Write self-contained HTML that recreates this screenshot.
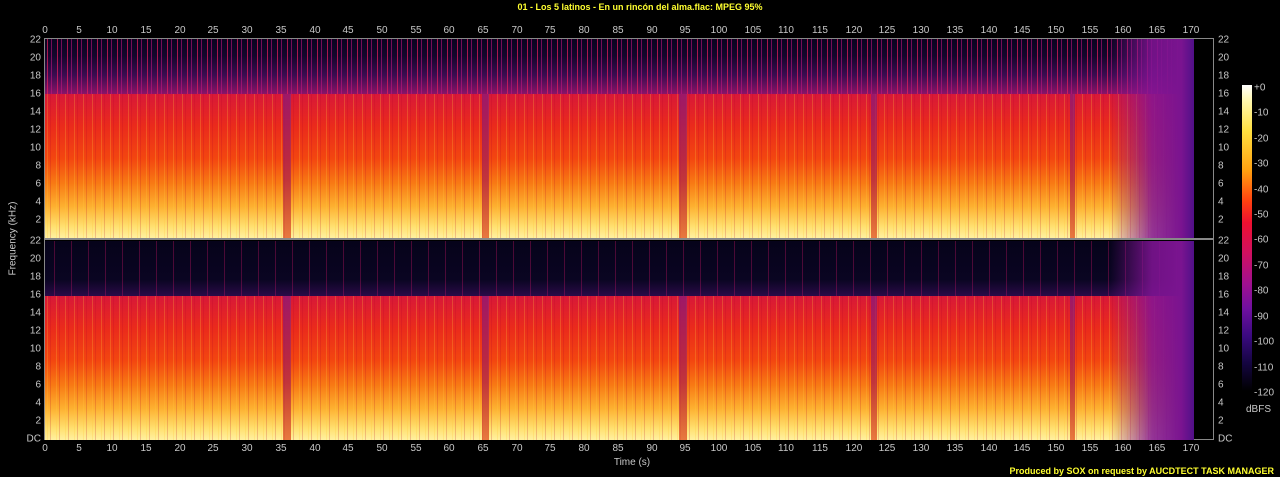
<!DOCTYPE html>
<html><head><meta charset="utf-8"><style>
*{margin:0;padding:0;box-sizing:border-box}
body{width:1280px;height:477px;background:#000;position:relative;overflow:hidden;font-family:"Liberation Sans",sans-serif;color:#c8c8c8;font-size:10px}
.t{position:absolute;top:2px;left:0;width:1280px;text-align:center;color:#ffff30;font-weight:bold;font-size:9px}
.frame{position:absolute;left:44px;width:1170px;border:1px solid #888}
.panel{position:absolute;left:45px;width:1149px;height:199px;overflow:hidden}
.hi{position:absolute;left:0;top:0;width:100%;height:55px;background:
repeating-linear-gradient(90deg,rgba(0,0,0,0) 0 2px,rgba(235,30,90,.7) 2px 3px,rgba(0,0,0,0) 3px 6px,rgba(200,20,130,.55) 6px 7px,rgba(0,0,0,0) 7px 10px),
linear-gradient(180deg,#0a0420 0%,#14062c 30%,#3a0c50 65%,#8a1468 100%)}
.lo{position:absolute;left:0;top:55px;width:100%;bottom:0;background:
repeating-linear-gradient(90deg,rgba(255,220,80,.0) 0 2px,rgba(255,200,60,.25) 2px 3px,rgba(0,0,0,0) 3px 5px,rgba(180,0,40,.2) 5px 6px,rgba(0,0,0,0) 6px 9px),
linear-gradient(180deg,#d81838 0%,#ea2a1c 22%,#f34610 45%,#f87a14 62%,#fdb030 78%,#ffe070 92%,#fff0a0 100%)}
.gap{position:absolute;top:55px;bottom:0;background:linear-gradient(180deg,#8a1878,#b02048 60%,#e05020);opacity:.75}
.tail{position:absolute;top:0;bottom:0;left:1065px;width:84px;background:linear-gradient(90deg,rgba(130,20,150,0) 0%,rgba(130,20,150,.85) 50%,#7a1490 85%,#501088 100%)}
.lab i{position:absolute;font-style:normal;transform:translateX(-50%);font-size:10px}
.yl i{position:absolute;font-style:normal;transform:translateY(-50%);font-size:10px;text-align:right;width:24px}
.yr i{position:absolute;font-style:normal;transform:translateY(-50%);font-size:10px;left:1218px}
.cb{position:absolute;left:1242px;top:85px;width:10px;height:306px;background:linear-gradient(180deg,#fff 0%,#fff8b0 5%,#ffe040 15%,#ffa010 28%,#ff4010 38%,#ee1030 45%,#d01060 55%,#a01090 65%,#7010a0 73%,#3a0a80 82%,#140540 91%,#000 100%)}
.cl i{position:absolute;left:1254px;font-style:normal;transform:translateY(-50%);font-size:10px}
</style></head><body>
<div class="t">01 - Los 5 latinos - En un rincón del alma.flac: MPEG 95%</div>

<div class="frame" style="top:38px;height:201px"></div>
<div class="frame" style="top:239px;height:201px"></div>

<div class="panel" style="top:39px">
<div class="hi"></div><div class="lo"></div>
<div class="gap" style="left:238px;width:8px"></div>
<div class="gap" style="left:437px;width:7px"></div>
<div class="gap" style="left:634px;width:8px"></div>
<div class="gap" style="left:826px;width:6px"></div>
<div class="gap" style="left:1025px;width:5px"></div>
<div class="tail"></div>
</div>
<div class="panel" style="top:241px">
<div class="hi" style="background:repeating-linear-gradient(90deg,rgba(0,0,0,0) 0 9px,rgba(200,20,100,.35) 9px 10px,rgba(0,0,0,0) 10px 17px),linear-gradient(180deg,#06031a 0%,#0a0522 70%,#2a0a48 100%)"></div><div class="lo"></div>
<div class="gap" style="left:238px;width:8px"></div>
<div class="gap" style="left:437px;width:7px"></div>
<div class="gap" style="left:634px;width:8px"></div>
<div class="gap" style="left:826px;width:6px"></div>
<div class="gap" style="left:1025px;width:5px"></div>
<div class="tail"></div>
</div>

<div class="lab" style="position:absolute;top:25px;left:0">
<i style="left:45px">0</i><i style="left:79px">5</i><i style="left:112px">10</i><i style="left:146px">15</i><i style="left:180px">20</i><i style="left:213px">25</i><i style="left:247px">30</i><i style="left:281px">35</i><i style="left:315px">40</i><i style="left:348px">45</i><i style="left:382px">50</i><i style="left:416px">55</i><i style="left:449px">60</i><i style="left:483px">65</i><i style="left:517px">70</i><i style="left:550px">75</i><i style="left:584px">80</i><i style="left:618px">85</i><i style="left:652px">90</i><i style="left:685px">95</i><i style="left:719px">100</i><i style="left:753px">105</i><i style="left:786px">110</i><i style="left:820px">115</i><i style="left:854px">120</i><i style="left:887px">125</i><i style="left:921px">130</i><i style="left:955px">135</i><i style="left:989px">140</i><i style="left:1022px">145</i><i style="left:1056px">150</i><i style="left:1090px">155</i><i style="left:1123px">160</i><i style="left:1157px">165</i><i style="left:1191px">170</i>
</div>
<div class="lab" style="position:absolute;top:443px;left:0">
<i style="left:45px">0</i><i style="left:79px">5</i><i style="left:112px">10</i><i style="left:146px">15</i><i style="left:180px">20</i><i style="left:213px">25</i><i style="left:247px">30</i><i style="left:281px">35</i><i style="left:315px">40</i><i style="left:348px">45</i><i style="left:382px">50</i><i style="left:416px">55</i><i style="left:449px">60</i><i style="left:483px">65</i><i style="left:517px">70</i><i style="left:550px">75</i><i style="left:584px">80</i><i style="left:618px">85</i><i style="left:652px">90</i><i style="left:685px">95</i><i style="left:719px">100</i><i style="left:753px">105</i><i style="left:786px">110</i><i style="left:820px">115</i><i style="left:854px">120</i><i style="left:887px">125</i><i style="left:921px">130</i><i style="left:955px">135</i><i style="left:989px">140</i><i style="left:1022px">145</i><i style="left:1056px">150</i><i style="left:1090px">155</i><i style="left:1123px">160</i><i style="left:1157px">165</i><i style="left:1191px">170</i>
</div>

<div class="yl" style="position:absolute;left:17px;top:0">
<i style="top:40px">22</i><i style="top:58px">20</i><i style="top:76px">18</i><i style="top:94px">16</i><i style="top:112px">14</i><i style="top:130px">12</i><i style="top:148px">10</i><i style="top:166px">8</i><i style="top:184px">6</i><i style="top:202px">4</i><i style="top:220px">2</i>
<i style="top:241px">22</i><i style="top:259px">20</i><i style="top:277px">18</i><i style="top:295px">16</i><i style="top:313px">14</i><i style="top:331px">12</i><i style="top:349px">10</i><i style="top:367px">8</i><i style="top:385px">6</i><i style="top:403px">4</i><i style="top:421px">2</i><i style="top:439px">DC</i>
</div>
<div class="yr" style="position:absolute;left:0;top:0">
<i style="top:40px">22</i><i style="top:58px">20</i><i style="top:76px">18</i><i style="top:94px">16</i><i style="top:112px">14</i><i style="top:130px">12</i><i style="top:148px">10</i><i style="top:166px">8</i><i style="top:184px">6</i><i style="top:202px">4</i><i style="top:220px">2</i>
<i style="top:241px">22</i><i style="top:259px">20</i><i style="top:277px">18</i><i style="top:295px">16</i><i style="top:313px">14</i><i style="top:331px">12</i><i style="top:349px">10</i><i style="top:367px">8</i><i style="top:385px">6</i><i style="top:403px">4</i><i style="top:421px">2</i><i style="top:439px">DC</i>
</div>

<div style="position:absolute;left:-32px;top:233px;width:90px;text-align:center;transform:rotate(-90deg);font-size:10px">Frequency (kHz)</div>
<div style="position:absolute;left:600px;top:457px;width:64px;text-align:center;font-size:10px">Time (s)</div>

<div class="cb"></div>
<div class="cl" style="position:absolute;left:0;top:0">
<i style="top:88px">+0</i><i style="top:113px">-10</i><i style="top:139px">-20</i><i style="top:164px">-30</i><i style="top:190px">-40</i><i style="top:215px">-50</i><i style="top:240px">-60</i><i style="top:266px">-70</i><i style="top:291px">-80</i><i style="top:317px">-90</i><i style="top:342px">-100</i><i style="top:368px">-110</i><i style="top:393px">-120</i>
</div>
<div style="position:absolute;left:1246px;top:404px;font-size:10px">dBFS</div>

<div style="position:absolute;right:6px;top:466px;color:#ffff30;font-weight:bold;font-size:9px">Produced by SOX on request by AUCDTECT TASK MANAGER</div>
</body></html>
